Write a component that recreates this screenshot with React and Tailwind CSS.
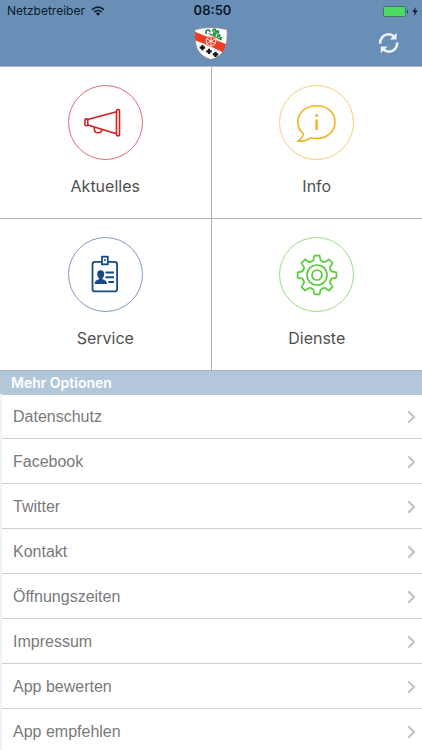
import React from 'react';

const tiles = [
  { label: 'Aktuelles', icon: MegaphoneIcon, color: 'text-[#cf1f1f]', ring: 'border-[#dd6b73]' },
  { label: 'Info', icon: InfoIcon, color: 'text-[#f0b323]', ring: 'border-[#f5cf78]' },
  { label: 'Service', icon: BadgeIcon, color: 'text-[#174a8c]', ring: 'border-[#7f97c6]' },
  { label: 'Dienste', icon: GearIcon, color: 'text-[#5dcb3c]', ring: 'border-[#98dd84]' },
];

const options = [
  'Datenschutz',
  'Facebook',
  'Twitter',
  'Kontakt',
  'Öffnungszeiten',
  'Impressum',
  'App bewerten',
  'App empfehlen',
];

function MegaphoneIcon() {
  return (
    <svg viewBox="0 0 44 44" className="w-11 h-11" fill="none" stroke="currentColor" strokeWidth="1.6" strokeLinejoin="round">
      <rect x="2" y="17.9" width="2.8" height="6.8" rx="1" />
      <path d="M4.8 18.6 L33.5 10.8 M4.8 24 L33.5 32.8" />
      <rect x="33.5" y="8.5" width="3" height="26.4" rx="1.4" />
      <path d="M11.4 26.2 V28.2 Q11.4 31.8 15 31.8 H15.6 Q18.6 31.8 18.9 28.5" />
    </svg>
  );
}

function InfoIcon() {
  return (
    <svg viewBox="0 0 44 44" className="w-11 h-11" fill="none" stroke="currentColor" strokeWidth="1.6" strokeLinejoin="round">
      <path d="M8.3 32.5 C4.8 29.7 2.8 26 2.8 21.2 C2.8 11.6 11 4.8 21.8 4.8 C32.6 4.8 40 11.6 40 21 C40 30.9 31.5 37.4 22 37.4 C19.6 37.4 17.5 37.1 15.8 36.8 C12 39.3 7.5 40.6 2.6 40.2 C6.2 38 8.2 35.6 8.3 32.5 Z" />
      <path d="M21.6 18.5 V29" strokeWidth="2.4" />
      <circle cx="21.6" cy="14.6" r="1.5" fill="currentColor" stroke="none" />
    </svg>
  );
}

function BadgeIcon() {
  return (
    <svg viewBox="0 0 44 44" className="w-11 h-11" fill="none" stroke="currentColor" strokeWidth="1.8">
      <path d="M19 8.9 H12 Q9.5 8.9 9.5 11.4 V35.9 Q9.5 38.4 12 38.4 H31.6 Q34.1 38.4 34.1 35.9 V11.4 Q34.1 8.9 31.6 8.9 H24.8" />
      <rect x="19" y="3.7" width="5.8" height="7.6" />
      <circle cx="21.9" cy="6.9" r="1" fill="currentColor" stroke="none" />
      <path d="M17.7 17.2 C20.2 17.2 21.5 18.9 21.2 21.5 C21 23.4 20.3 24.5 19.4 25.3 V26.3 C22 27.1 23.9 27.9 24 31 H11.7 C11.7 27.9 13.5 27.1 16.1 26.3 V25.3 C15.1 24.5 14.4 23.4 14.2 21.5 C13.9 18.9 15.2 17.2 17.7 17.2 Z" fill="currentColor" stroke="none" />
      <path d="M22.5 19.5 H31 M22.5 24.3 H31 M25.3 29 H31" strokeWidth="2" />
    </svg>
  );
}

function GearIcon() {
  return (
    <svg viewBox="-22 -22 44 44" className="w-11 h-11" fill="none" stroke="currentColor" strokeWidth="1.7" strokeLinejoin="round" strokeLinecap="round">
      {[0, 45, 90, 135, 180, 225, 270, 315].map((angle) => (
        <path key={angle} transform={`rotate(${angle})`} d="M-5.6 -13.5 L-3.7 -14.4 L-2.6 -19.4 H2.6 L3.7 -14.4 L5.6 -13.5" />
      ))}
      <circle r="10" />
      <circle r="5" />
    </svg>
  );
}

function Crest() {
  return (
    <svg viewBox="0 0 34 34" className="w-[34px] h-[34px]" role="img" aria-label="Wappen">
      <defs>
        <clipPath id="shield">
          <path d="M1 2.6 Q17 -1.6 33 2.6 C33.6 12 32.6 19 29.6 24 C27 28 22.5 31 17 32.6 C11.5 31 7 28 4.4 24 C1.4 19 0.4 12 1 2.6 Z" />
        </clipPath>
      </defs>
      <g clipPath="url(#shield)">
        <path d="M0 0 H34 V34 H0 Z" fill="#fbfbfb" />
        <path d="M0 4.2 C8 8.2 22 12.5 34 18 V28.5 C24 22.5 12 17 0 13 Z" fill="#ee3d24" />
      </g>
      {/* Oak twig */}
      <g fill="#1f9440">
        <path d="M12 7.4 C10.4 5.8 10.8 3 13.2 2.4 C15.4 1.9 17 3.4 16.6 5.2 L15.2 5 C15 4 14.2 3.7 13.4 4.1 C12.6 4.6 12.8 5.8 13.4 6.3 Z" />
        <circle cx="20.2" cy="3.4" r="2.1" />
        <circle cx="23.4" cy="5" r="1.9" />
        <circle cx="20.6" cy="6.9" r="1.9" />
        <circle cx="24.6" cy="8.4" r="1.8" />
        <circle cx="26.6" cy="11" r="1.5" />
      </g>
      <path d="M15 6.5 L19.5 8.8 L27.5 13" fill="none" stroke="#1f9440" strokeWidth="1.2" />
      <path d="M19.6 2.8 L20.8 5.4 M23 5.6 L24.6 8.2" fill="none" stroke="#fbfbfb" strokeWidth="0.6" />
      {/* Wheel */}
      <circle cx="17" cy="14.2" r="5.6" fill="#ee3d24" />
      <g fill="none" stroke="#fff" strokeWidth="0.9">
        <circle cx="17" cy="14.2" r="4.8" />
        <path d="M17 9.4 V19 M12.8 11.8 L21.2 16.6 M21.2 11.8 L12.8 16.6" />
      </g>
      {/* Crosses */}
      <path
        d="M8.4 17.9 V23.3 M5.7 20.6 H11.1 M15 21.7 V27.1 M12.3 24.4 H17.7 M21.5 24.7 V30.1 M18.8 27.4 H24.2"
        stroke="#111"
        strokeWidth="2.2"
      />
      <path
        d="M1 2.6 Q17 -1.6 33 2.6 C33.6 12 32.6 19 29.6 24 C27 28 22.5 31 17 32.6 C11.5 31 7 28 4.4 24 C1.4 19 0.4 12 1 2.6 Z"
        fill="none"
        stroke="#857e86"
        strokeWidth="0.7"
      />
    </svg>
  );
}

function StatusBar() {
  return (
    <div className="grid grid-cols-3 items-center h-[22px] pl-[7px] pr-1 text-[#0b1a2c]">
      <div className="flex items-center gap-[6px] text-xs">
        <span>Netzbetreiber</span>
        <svg viewBox="0 0 14 10" className="w-[14px] h-[10px]" fill="none" stroke="currentColor" strokeWidth="1.6">
          <path d="M1 3.8 Q7 -1.6 13 3.8 M3.2 6.2 Q7 2.8 10.8 6.2" />
          <path d="M4.8 7.4 Q7 5.6 9.2 7.4 L7 9.7 Z" fill="currentColor" stroke="none" />
        </svg>
      </div>
      <div className="text-center text-[13px] font-semibold">08:50</div>
      <div className="flex items-center justify-end gap-[3px]">
        <svg viewBox="0 0 26 11" className="w-[26px] h-[11px]">
          <rect x="0.5" y="0.5" width="22" height="10" rx="1" fill="#4cd964" stroke="#3f7a63" />
          <path d="M24 3.5 Q25.6 5.5 24 7.5 Z" fill="#0b1a2c" />
        </svg>
        <svg viewBox="0 0 6 9" className="w-[6px] h-[9px]">
          <path d="M3.8 0 L0.3 5 H2.6 L1.8 9 L5.8 3.6 H3.3 Z" fill="#0b1a2c" />
        </svg>
      </div>
    </div>
  );
}

function RefreshIcon() {
  return (
    <svg viewBox="0 0 22 22" className="w-[22px] h-[22px]" fill="none" stroke="#eaf1f9" strokeWidth="2.6">
      <path d="M2.2 11.6 C1.8 6.4 5.6 2.6 10 2.3 C12.6 2.2 14.6 3 16.4 4.8" />
      <path d="M19.2 10.4 C19.6 15.6 15.8 19.4 11.4 19.7 C8.8 19.8 6.8 19 5 17.2" />
      <path d="M18.6 0.8 V7.6 H11.8 Z M2.8 21.2 V14.4 H9.6 Z" fill="#eaf1f9" stroke="none" />
    </svg>
  );
}

const App = () => {
  return (
    <div className="h-screen overflow-hidden bg-white font-[Inter,sans-serif]">
      {/* Header */}
      <header className="bg-[#698fb7] border-b border-[#b5b5b5]">
        <StatusBar />
        <div className="grid grid-cols-3 items-center h-11 pr-[22px]">
          <span />
          <div className="flex justify-center pl-[22px]">
            <Crest />
          </div>
          <button type="button" aria-label="Aktualisieren" className="justify-self-end pb-[3px]">
            <RefreshIcon />
          </button>
        </div>
      </header>

      {/* Main tiles */}
      <nav className="grid grid-cols-2 gap-px bg-[#b3b3b3] border-b border-[#a9b0b8]">
        {tiles.map(({ label, icon: Icon, color, ring }) => (
          <button key={label} type="button" className="flex flex-col items-center gap-[14px] h-[151px] pt-[18px] bg-white">
            <span className={`flex shrink-0 items-center justify-center w-[75px] h-[75px] rounded-full border ${ring} ${color}`}>
              <Icon />
            </span>
            <span className="text-base text-[#505050]">{label}</span>
          </button>
        ))}
      </nav>

      {/* More options */}
      <h2 className="h-6 pl-[11px] bg-[#b3c7db] text-white text-sm leading-6 font-semibold">Mehr Optionen</h2>
      <ul className="border-l-2 border-[#f3f3f3]">
        {options.map((option) => (
          <li key={option} className="border-b border-[#d0d0d0] first:-mt-px">
            <button
              type="button"
              className="flex items-center justify-between w-full h-11 pt-[2px] pl-[11px] pr-[6px] text-base text-[#7a7a7a] font-['Liberation_Sans',Arial,sans-serif]"
            >
              {option}
              <svg viewBox="0 0 9 14" className="w-[9px] h-[14px]" fill="none" stroke="#c4c4c8" strokeWidth="2.2">
                <path d="M1.2 1.2 L7 7 L1.2 12.8" />
              </svg>
            </button>
          </li>
        ))}
      </ul>
    </div>
  );
};

export default App;
